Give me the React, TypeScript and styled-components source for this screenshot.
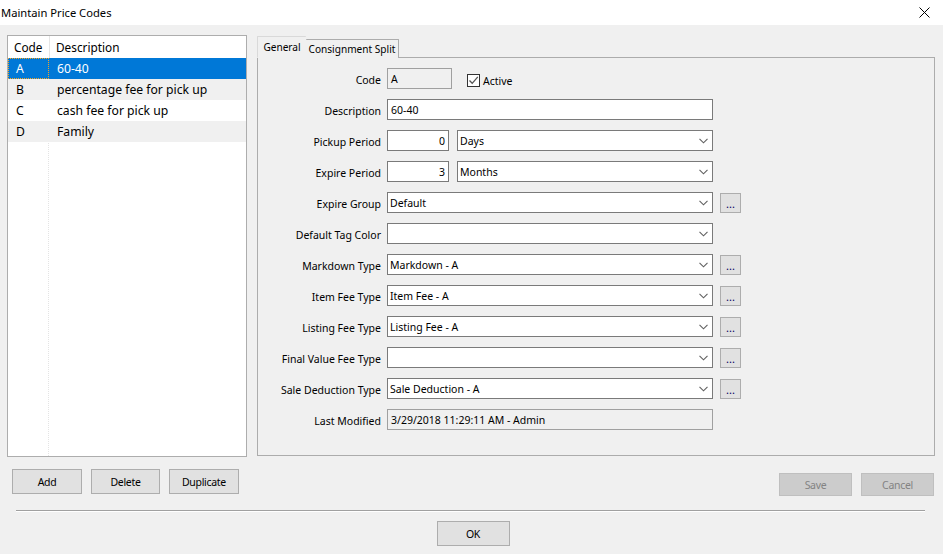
import React from "react";
import styled, { createGlobalStyle } from "styled-components";

const GlobalStyle = createGlobalStyle`
  html, body {
    margin: 0;
    padding: 0;
    background: #f0f0f0;
  }
  body {
    font-family: "Noto Sans", "Open Sans", sans-serif;
    font-size: 12px;
    color: #000;
  }
`;

interface IRowProps {
  shade: "sel" | "alt" | "plain";
}

interface IBoxProps {
  w: number;
  readOnly?: boolean;
  align?: string;
}

interface IBtnProps {
  w: number;
  disabled?: boolean;
}

const Window = styled.div`
  width: 943px;
  height: 554px;
  background: #f0f0f0;
  display: flex;
  flex-direction: column;
  overflow: hidden;
`;

const TitleBar = styled.div`
  height: 25px;
  background: #fff;
  display: flex;
  align-items: center;
  justify-content: space-between;
  padding: 0 13px 0 1px;
  font-size: 11.2px;
`;

const CloseX = styled.svg`
  width: 11px;
  height: 11px;
`;

const Body = styled.div`
  display: flex;
  gap: 10px;
  padding: 10px 0 0 7px;
`;

const ListBox = styled.div`
  width: 238px;
  height: 420px;
  border: 1px solid #adadad;
  background: #fff;
  display: flex;
  flex-direction: column;
  position: relative;
  font-size: 12.2px;
`;

const ColumnLine = styled.div`
  position: absolute;
  left: 40px;
  top: 0;
  bottom: 0;
  border-left: 1px dotted #e4e4e4;
`;

const HeaderRow = styled.div`
  display: grid;
  grid-template-columns: 41px 1fr;
  height: 22px;
  align-items: center;
  position: relative;
  z-index: 1;
  background: #fff;
  font-size: 11.8px;
`;

const HeaderCell = styled.div`
  padding-left: 6px;
  height: 100%;
  display: flex;
  align-items: center;
  & + & {
    border-left: 1px solid #e5e5e5;
    padding-left: 6px;
  }
`;

const ListRow = styled.div<IRowProps>`
  display: grid;
  grid-template-columns: 41px 1fr;
  height: 21px;
  align-items: center;
  position: relative;
  z-index: 1;
  background: ${(p) =>
    p.shade === "sel" ? "#0078d7" : p.shade === "alt" ? "#f0f0f0" : "#fff"};
  color: ${(p) => (p.shade === "sel" ? "#fff" : "#000")};
`;

const CodeCell = styled.div<{ focused?: boolean }>`
  height: 100%;
  display: flex;
  align-items: center;
  padding-left: 8px;
  box-sizing: border-box;
  outline: ${(p) => (p.focused ? "1px dotted #f5a623" : "none")};
  outline-offset: -1px;
`;

const DescCell = styled.div`
  padding-left: 8px;
`;

const TabArea = styled.div`
  width: 678px;
  display: flex;
  flex-direction: column;
  padding-top: 1px;
`;

const TabStrip = styled.div`
  display: flex;
  align-items: flex-end;
  height: 22px;
  position: relative;
  z-index: 1;
`;

const Tab = styled.div<{ active?: boolean }>`
  width: ${(p) => (p.active ? "49px" : "93px")};
  height: ${(p) => (p.active ? "22px" : "19px")};
  border: 1px solid ${(p) => (p.active ? "#d9d9d9" : "#acacac")};
  border-bottom: ${(p) => (p.active ? "1px solid #f0f0f0" : "none")};
  border-right: ${(p) => (p.active ? "none" : "1px solid #acacac")};
  border-left: ${(p) => (p.active ? "1px solid #d9d9d9" : "none")};
  box-sizing: border-box;
  background: #f0f0f0;
  display: flex;
  justify-content: center;
  align-items: ${(p) => (p.active ? "flex-start" : "center")};
  padding-top: ${(p) => (p.active ? "3px" : "0")};
  font-size: 10.1px;
  border-radius: 1px 1px 0 0;
`;

const Panel = styled.div`
  height: 399px;
  box-sizing: border-box;
  border: 1px solid #acacac;
  margin-top: -1px;
  padding: 10px 0 0 0;
`;

const Form = styled.div`
  display: grid;
  grid-template-columns: 123px 1fr;
  column-gap: 6px;
  row-gap: 10px;
  align-items: center;
`;

const Label = styled.div`
  text-align: right;
  white-space: nowrap;
  font-size: 10.5px;
  padding-top: 3px;
`;

const FieldRow = styled.div`
  display: flex;
  align-items: center;
  height: 21px;
`;

const TextBox = styled.div<IBoxProps>`
  width: ${(p) => p.w}px;
  height: 21px;
  box-sizing: border-box;
  border: 1px solid ${(p) => (p.readOnly ? "#a0a0a0" : "#7a7a7a")};
  background: ${(p) => (p.readOnly ? "#f0f0f0" : "#fff")};
  display: flex;
  align-items: center;
  justify-content: ${(p) => p.align || "flex-start"};
  padding: 0 3px 0 3px;
  font-size: 10.5px;
`;

const Select = styled.div<{ w: number }>`
  width: ${(p) => p.w}px;
  height: 21px;
  box-sizing: border-box;
  border: 1px solid #7a7a7a;
  background: #fff;
  display: flex;
  align-items: center;
  justify-content: space-between;
  padding: 0 4px 0 2px;
  font-size: 10.5px;
`;

const Chevron = styled.svg`
  width: 9px;
  height: 6px;
`;

const DotsButton = styled.div`
  width: 21px;
  height: 20px;
  box-sizing: border-box;
  margin-left: 7px;
  border: 1px solid #adadad;
  background: #e1e1e1;
  display: flex;
  align-items: center;
  justify-content: center;
  color: #000060;
  font-size: 11px;
  line-height: 1;
  padding-top: 2px;
`;

const CheckWrap = styled.label`
  display: flex;
  align-items: center;
  gap: 3px;
  margin-left: 15px;
  font-size: 10.5px;
  padding-top: 4px;
`;

const CheckBox = styled.div`
  width: 13px;
  height: 13px;
  box-sizing: border-box;
  border: 1px solid #333;
  background: #fff;
  display: flex;
  align-items: center;
  justify-content: center;
`;

const ButtonBar = styled.div`
  display: flex;
  justify-content: space-between;
  padding: 12px 9px 0 12px;
  height: 53px;
  box-sizing: border-box;
`;

const ButtonGroup = styled.div<{ offset?: number }>`
  display: flex;
  gap: 9px;
  padding-top: ${(p) => p.offset || 0}px;
`;

const Button = styled.div<IBtnProps>`
  width: ${(p) => p.w}px;
  height: ${(p) => (p.disabled ? 23 : 25)}px;
  box-sizing: border-box;
  border: 1px solid ${(p) => (p.disabled ? "#bfbfbf" : "#adadad")};
  background: ${(p) => (p.disabled ? "#cccccc" : "#e1e1e1")};
  color: ${(p) => (p.disabled ? "#838383" : "#000")};
  display: flex;
  align-items: center;
  justify-content: center;
  font-size: 10.5px;
  letter-spacing: -0.3px;
`;

const Separator = styled.div`
  margin: 0 18px 0 16px;
  height: 1px;
  background: #a0a0a0;
  border-bottom: 1px solid #fff;
`;

const Footer = styled.div`
  display: flex;
  justify-content: center;
  padding: 9px 0 0 3px;
`;

const items = [
  { code: "A", desc: "60-40" },
  { code: "B", desc: "percentage fee for pick up" },
  { code: "C", desc: "cash fee for pick up" },
  { code: "D", desc: "Family" },
];

const Arrow = () => (
  <Chevron viewBox="0 0 9 6">
    <path d="M0.5 0.8 L4.5 4.8 L8.5 0.8" fill="none" stroke="#606060" strokeWidth="1.1" />
  </Chevron>
);

const Drop = ({ w, value }: { w: number; value: string }) => (
  <Select w={w}>
    <span>{value}</span>
    <Arrow />
  </Select>
);

const App = () => {
  const fullRows = [
    { label: "Expire Group", value: "Default", dots: true },
    { label: "Default Tag Color", value: "", dots: false },
    { label: "Markdown Type", value: "Markdown - A", dots: true },
    { label: "Item Fee Type", value: "Item Fee - A", dots: true },
    { label: "Listing Fee Type", value: "Listing Fee - A", dots: true },
    { label: "Final Value Fee Type", value: "", dots: true },
    { label: "Sale Deduction Type", value: "Sale Deduction - A", dots: true },
  ];

  return (
    <Window>
      <GlobalStyle />
      <TitleBar>
        <span>Maintain Price Codes</span>
        <CloseX viewBox="0 0 11 11">
          <path d="M0.5 0.5 L10.5 10.5 M10.5 0.5 L0.5 10.5" stroke="#000" strokeWidth="1" />
        </CloseX>
      </TitleBar>

      <Body>
        <ListBox>
          <ColumnLine />
          <HeaderRow>
            <HeaderCell>Code</HeaderCell>
            <HeaderCell>Description</HeaderCell>
          </HeaderRow>
          {items.map((it, i) => (
            <ListRow
              key={it.code}
              shade={i === 0 ? "sel" : i % 2 === 1 ? "alt" : "plain"}
            >
              <CodeCell focused={i === 0}>{it.code}</CodeCell>
              <DescCell>{it.desc}</DescCell>
            </ListRow>
          ))}
        </ListBox>

        <TabArea>
          <TabStrip>
            <Tab active>General</Tab>
            <Tab>Consignment Split</Tab>
          </TabStrip>
          <Panel>
            <Form>
              <Label>Code</Label>
              <FieldRow>
                <TextBox w={65} readOnly>
                  A
                </TextBox>
                <CheckWrap>
                  <CheckBox>
                    <svg width="11" height="11" viewBox="0 0 11 11">
                      <path d="M1.5 5.5 L4.2 8.3 L9.8 1.8" fill="none" stroke="#555" strokeWidth="1.3" />
                    </svg>
                  </CheckBox>
                  Active
                </CheckWrap>
              </FieldRow>

              <Label>Description</Label>
              <FieldRow>
                <TextBox w={326}>60-40</TextBox>
              </FieldRow>

              <Label>Pickup Period</Label>
              <FieldRow>
                <TextBox w={62} align="flex-end">
                  0
                </TextBox>
                <div style={{ width: 8 }} />
                <Drop w={256} value="Days" />
              </FieldRow>

              <Label>Expire Period</Label>
              <FieldRow>
                <TextBox w={62} align="flex-end">
                  3
                </TextBox>
                <div style={{ width: 8 }} />
                <Drop w={256} value="Months" />
              </FieldRow>

              {fullRows.map((r) => (
                <React.Fragment key={r.label}>
                  <Label>{r.label}</Label>
                  <FieldRow>
                    <Drop w={326} value={r.value} />
                    {r.dots ? <DotsButton>...</DotsButton> : null}
                  </FieldRow>
                </React.Fragment>
              ))}

              <Label>Last Modified</Label>
              <FieldRow>
                <TextBox w={326} readOnly>
                  3/29/2018 11:29:11 AM - Admin
                </TextBox>
              </FieldRow>
            </Form>
          </Panel>
        </TabArea>
      </Body>

      <ButtonBar>
        <ButtonGroup>
          <Button w={70}>Add</Button>
          <Button w={69}>Delete</Button>
          <Button w={70}>Duplicate</Button>
        </ButtonGroup>
        <ButtonGroup offset={4}>
          <Button w={73} disabled>
            Save
          </Button>
          <Button w={73} disabled>
            Cancel
          </Button>
        </ButtonGroup>
      </ButtonBar>

      <Separator />

      <Footer>
        <Button w={73}>OK</Button>
      </Footer>
    </Window>
  );
};

export default App;
